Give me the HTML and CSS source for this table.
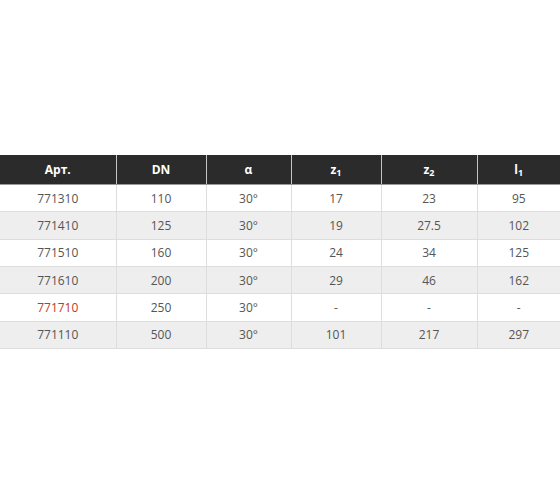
FILE: index.html
```html
<!DOCTYPE html>
<html lang="ru">
<head>
<meta charset="utf-8">
<link rel="stylesheet" href="styles.css">
</head>
<body>
<div class="wrap">
<table class="spec">
  <colgroup>
    <col class="c1"><col class="c2"><col class="c3"><col class="c4"><col class="c5"><col class="c6">
  </colgroup>
  <thead>
    <tr><th>Арт.</th><th>DN</th><th>α</th><th>z<sub>1</sub></th><th>z<sub>2</sub></th><th>l<sub>1</sub></th></tr>
  </thead>
  <tbody>
    <tr><td>771310</td><td>110</td><td>30°</td><td>17</td><td>23</td><td>95</td></tr>
    <tr><td>771410</td><td>125</td><td>30°</td><td>19</td><td>27.5</td><td>102</td></tr>
    <tr><td>771510</td><td>160</td><td>30°</td><td>24</td><td>34</td><td>125</td></tr>
    <tr><td>771610</td><td>200</td><td>30°</td><td>29</td><td>46</td><td>162</td></tr>
    <tr><td class="red">771710</td><td>250</td><td>30°</td><td>-</td><td>-</td><td>-</td></tr>
    <tr><td>771110</td><td>500</td><td>30°</td><td>101</td><td>217</td><td>297</td></tr>
  </tbody>
</table>
</div>
</body>
</html>
```
FILE: styles.css
```css
html, body {
  margin: 0;
  padding: 0;
  background: #ffffff;
}
.wrap {
  padding-top: 155px;
}
.spec {
  width: 560px;
  border-collapse: collapse;
  table-layout: fixed;
  font-family: "Open Sans", "Liberation Sans", sans-serif;
  font-size: 12px;
  color: #555555;
}
.c1 { width: 116px; }
.c2 { width: 90px; }
.c3 { width: 85px; }
.c4 { width: 90px; }
.c5 { width: 96px; }
.c6 { width: 83px; }
.spec th {
  background: #2b2b2b;
  color: #ffffff;
  font-weight: 700;
  height: 29px;
  padding: 0;
  text-align: center;
  border-left: 1px solid #c4c4c4;
  border-bottom: 1px solid #9a9a9a;
}
.spec th:first-child, .spec td:first-child { border-left: none; }
.spec sub {
  font-size: 9px;
  vertical-align: -2px;
}
.spec td {
  height: 26.33px;
  padding: 0;
  text-align: center;
  border-left: 1px solid #dddddd;
  border-bottom: 1px solid #dddddd;
}
.spec tbody tr:nth-child(even) td {
  background: #eeeeee;
}
.spec td.red { color: #c0392b; }
```
